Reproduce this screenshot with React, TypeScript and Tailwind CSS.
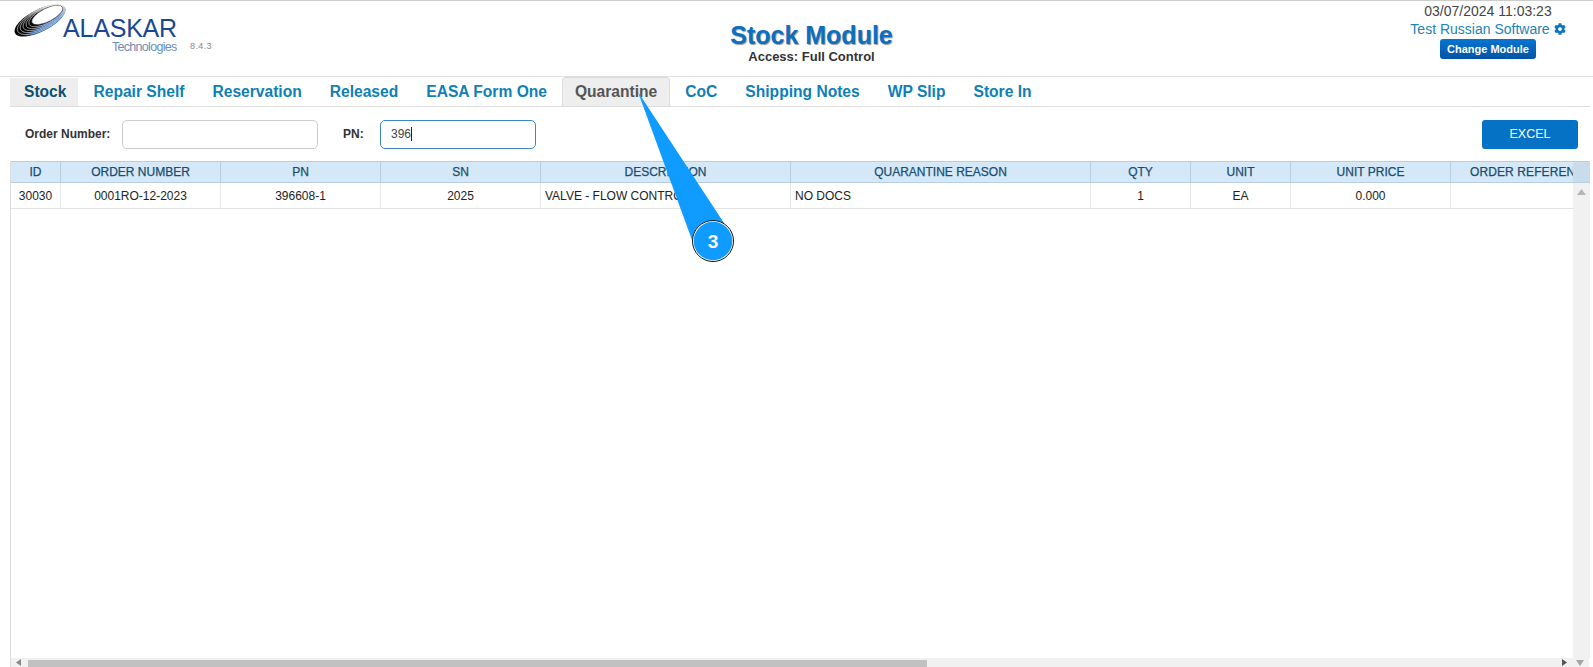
import { FaCog } from 'react-icons/fa';

const tabs = ['Repair Shelf', 'Reservation', 'Released', 'EASA Form One'];
const tabsAfter = ['CoC', 'Shipping Notes', 'WP Slip', 'Store In'];

const columns = [
  { label: 'ID', value: '30030' },
  { label: 'ORDER NUMBER', value: '0001RO-12-2023' },
  { label: 'PN', value: '396608-1' },
  { label: 'SN', value: '2025' },
  { label: 'DESCRIPTION', value: 'VALVE - FLOW CONTROL', left: true },
  { label: 'QUARANTINE REASON', value: 'NO DOCS', left: true },
  { label: 'QTY', value: '1' },
  { label: 'UNIT', value: 'EA' },
  { label: 'UNIT PRICE', value: '0.000' },
  { label: 'ORDER REFERENCE', value: '' },
];

const gridCols = 'grid grid-cols-[50px_160px_160px_160px_250px_300px_100px_100px_160px_122px]';

function Logo() {
  return (
    <div className="relative h-[60px] w-[220px]">
      <svg className="absolute left-[13px] top-[1px]" width="56" height="34" viewBox="0 0 56 34" fill="none">
        <defs>
          <linearGradient id="ring" x1="0.3" y1="0.1" x2="0.6" y2="1">
            <stop offset="0.6" stopColor="#050505" />
            <stop offset="0.78" stopColor="#1c4f9e" />
            <stop offset="1" stopColor="#1a62b8" />
          </linearGradient>
        </defs>
        <g transform="rotate(-27 27 16.5)">
          <ellipse cx="27" cy="16.5" rx="28" ry="11" fill="url(#ring)" />
          {[1, 2, 3, 4, 5].map((i) => (
            <ellipse
              key={i}
              cx={27 + i * 1.5}
              cy={16.5 - i * 0.3}
              rx={28 - i * 1.8}
              ry={11 - i * 0.7}
              stroke="#ffffff"
              strokeWidth="0.5"
            />
          ))}
          <ellipse cx="36" cy="14.8" rx="17" ry="6.6" fill="#ffffff" stroke="#555555" strokeWidth="0.5" />
        </g>
      </svg>
      <span className="absolute left-[63px] top-[13px] text-[25px] leading-[24px] tracking-[-0.2px] text-[#1b4791]">ALASKAR</span>
      <span className="absolute left-[112px] top-[36px] text-[12.5px] leading-[16px] tracking-[-0.7px] text-[#6f8db5]">Technologies</span>
      <span className="absolute left-[190px] top-[37px] text-[9px] leading-[12px] tracking-[0.4px] text-[#888888]">8.4.3</span>
    </div>
  );
}

export default function App() {
  return (
    <div className="relative flex h-screen flex-col overflow-hidden bg-white font-['Liberation_Sans',Arial,sans-serif]">
      {/* Header */}
      <header className="flex h-[77px] shrink-0 border-y border-t-[#cccccc] border-b-[#dddddd]">
        <div className="w-[545px] pt-[2px]">
          <Logo />
        </div>
        <div className="flex flex-1 flex-col items-center pt-[19px]">
          <h1 className="text-[25px] font-bold leading-[30px] text-[#0b6fc2] [text-shadow:1px_1px_1px_#999999]">Stock Module</h1>
          <p className="text-[13px] font-bold leading-[14px] text-[#333333]">Access: Full Control</p>
        </div>
        <div className="flex w-[515px] flex-col items-center pl-[335px] pr-[30px]">
          <span className="mt-[2px] whitespace-nowrap text-[14px] leading-[17px] text-[#444444]">03/07/2024 11:03:23</span>
          <span className="flex items-center gap-[4px] whitespace-nowrap text-[14px] leading-[18px] text-[#1d84b5]">
            Test Russian Software
            <FaCog size={12} className="text-[#1076bc]" />
          </span>
          <button className="mt-[1px] h-[20px] w-[96px] rounded-[3px] bg-gradient-to-b from-[#0875d1] to-[#0353a4] text-[11px] font-bold text-white">
            Change Module
          </button>
        </div>
      </header>

      {/* Tabs */}
      <nav className="ml-[10px] mr-[3px] flex h-[30px] shrink-0 items-stretch border-b border-[#dddddd] text-[15.6px] font-bold">
        <a className="mt-[1px] flex items-center bg-[#eeeeee] pl-[14px] pr-[12px] text-[#0d4f6e]">Stock</a>
        <div className="w-[1px]" />
        {tabs.map((t) => (
          <a key={t} className="flex items-center whitespace-nowrap px-[14px] text-[#0f7fb8]">{t}</a>
        ))}
        <a className="ml-[1px] flex items-center rounded-t-[4px] border border-b-0 border-[#dddddd] bg-[#eeeeee] px-[12px] text-[#555555]">Quarantine</a>
        <div className="w-[1px]" />
        {tabsAfter.map((t) => (
          <a key={t} className="flex items-center whitespace-nowrap px-[14px] text-[#0f7fb8]">{t}</a>
        ))}
      </nav>

      {/* Filters */}
      <div className="flex h-[54px] shrink-0 items-center pl-[25px] pr-[15px] text-[12px] font-bold text-[#333333]">
        <label className="w-[97px]">Order Number:</label>
        <input className="h-[29px] w-[196px] rounded-[5px] border border-[#cccccc] bg-white" />
        <label className="ml-[25px] w-[37px]">PN:</label>
        <div className="flex h-[29px] w-[156px] items-center rounded-[5px] border border-[#3a87c4] px-[10px] text-[12px] font-normal text-[#444444]">
          396<span className="h-[14px] w-px bg-[#222222]" />
        </div>
        <button className="ml-auto mt-[1px] h-[29px] w-[96px] rounded-[3px] bg-[#0672c6] text-[12.5px] font-normal text-white">EXCEL</button>
      </div>

      {/* Grid */}
      <div className="ml-[10px] mr-[4px] flex min-h-0 flex-1 flex-col border-l border-[#dddddd]">
        <div className="flex shrink-0">
          <div className={`${gridCols} h-[22px] flex-1 border-y border-[#b9cfe0] bg-[#d5e8f7] text-[12px] text-[#174d73] [-webkit-text-stroke:0.25px_#174d73]`}>
            {columns.map((c) => (
              <div key={c.label} className="flex items-center justify-center overflow-hidden whitespace-nowrap border-r border-[#b9cfe0] last:border-r-0">
                {c.label === 'ORDER REFERENCE' ? <span className="w-full pl-[19px] tracking-[0.1px]">ORDER REFEREN</span> : c.label}
              </div>
            ))}
          </div>
          <div className="w-[17px] shrink-0 border-y border-[#b9cfe0] bg-[#c9dcec]" />
        </div>

        <div className="flex min-h-0 flex-1">
          <div className="flex-1">
            <div className={`${gridCols} h-[26px] border-b border-[#e3e3e3] text-[12px] text-[#222222]`}>
              {columns.map((c) => (
                <div
                  key={c.label}
                  className={`flex items-center overflow-hidden whitespace-nowrap border-r border-[#e8e8e8] last:border-r-0 ${c.left ? 'pl-[4px]' : 'justify-center'}`}
                >
                  {c.value}
                </div>
              ))}
            </div>
          </div>
          {/* Vertical scrollbar */}
          <div className="flex w-[17px] shrink-0 justify-center bg-[#f1f1f1] pt-[6px]">
            <svg width="9" height="6" viewBox="0 0 9 6"><path d="M4.5 0 9 6H0z" fill="#b5b5b5" /></svg>
          </div>
        </div>

        {/* Horizontal scrollbar */}
        <div className="flex h-[9px] shrink-0 items-end bg-[#f1f1f1]">
          <svg className="mb-[1px] ml-[5px] shrink-0" width="5" height="7" viewBox="0 0 5 7"><path d="M5 0v7L0 3.5z" fill="#8a8a8a" /></svg>
          <div className="ml-[7px] h-[7px] w-[899px] bg-[#c1c1c1]" />
          <div className="flex-1" />
          <svg className="mb-[1px] shrink-0" width="5" height="7" viewBox="0 0 5 7"><path d="M0 0v7l5-3.5z" fill="#555555" /></svg>
          <svg className="mb-[1px] ml-[9px] mr-[5px] shrink-0" width="8" height="6" viewBox="0 0 8 6"><path d="M0 0h8L4 6z" fill="#a5a5a5" /></svg>
        </div>
      </div>

      {/* Callout */}
      <svg className="pointer-events-none absolute left-[630px] top-[90px]" width="110" height="180" viewBox="0 0 110 180" fill="none">
        <path d="M8 2 L94 133 L62 150 Z" fill="#0f9bff" />
        <circle cx="83" cy="151" r="20" fill="#0f9bff" stroke="#ffffff" strokeWidth="1.5" />
        <circle cx="83" cy="151" r="20.5" stroke="#111111" strokeWidth="1" />
      </svg>
      <span className="absolute left-[693px] top-[231px] w-[40px] text-center text-[19px] font-bold leading-[22px] text-white">3</span>
    </div>
  );
}
